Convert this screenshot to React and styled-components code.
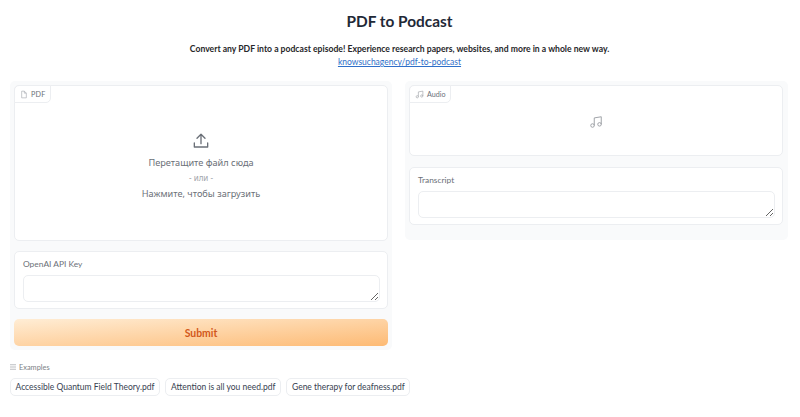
import React from "react";
import styled, { createGlobalStyle } from "styled-components";

const GlobalStyle = createGlobalStyle`
  html, body {
    margin: 0;
    padding: 0;
    background: #ffffff;
  }
  body {
    font-family: Lato, "Noto Sans", "Liberation Sans", sans-serif;
    color: #27272a;
  }
  * {
    box-sizing: border-box;
  }
`;

const App = () => {
  return (
    <>
      <GlobalStyle />
      <Page>
        <Title>PDF to Podcast</Title>
        <Intro>
          Convert any PDF into a podcast episode! Experience research papers,
          websites, and more in a whole new way.
        </Intro>
        <RepoLink href="#">knowsuchagency/pdf-to-podcast</RepoLink>
        <Columns>
          <LeftPanel>
            <Block $height={156}>
              <Tab>
                <FileIcon />
                <TabText $spaced>PDF</TabText>
              </Tab>
              <Dropzone>
                <UploadIcon />
                <DropMain>Перетащите файл сюда</DropMain>
                <DropOr>- или -</DropOr>
                <DropMain>Нажмите, чтобы загрузить</DropMain>
              </Dropzone>
            </Block>
            <Block $height={58}>
              <FieldLabel>OpenAI API Key</FieldLabel>
              <TextBox />
            </Block>
            <SubmitButton>Submit</SubmitButton>
          </LeftPanel>
          <RightPanel>
            <Block $height={71}>
              <Tab>
                <NoteIcon size={9} />
                <TabText>Audio</TabText>
              </Tab>
              <AudioEmpty>
                <NoteIcon size={14} />
              </AudioEmpty>
            </Block>
            <Block $height={58}>
              <FieldLabel>Transcript</FieldLabel>
              <TextBox />
            </Block>
          </RightPanel>
        </Columns>
        <ExamplesLabel>
          <ListIcon />
          Examples
        </ExamplesLabel>
        <Chips>
          <Chip>Accessible Quantum Field Theory.pdf</Chip>
          <Chip>Attention is all you need.pdf</Chip>
          <Chip>Gene therapy for deafness.pdf</Chip>
        </Chips>
      </Page>
    </>
  );
};

const FileIcon = () => (
  <svg width="8" height="9" viewBox="0 0 24 24" fill="none" stroke="#a9acb2" strokeWidth="2">
    <path d="M13 2H5v20h14V8z" />
    <path d="M13 2v6h6" />
  </svg>
);

const NoteIcon = ({ size }) => (
  <svg width={size} height={size} viewBox="0 0 24 24" fill="none" stroke="#9a9da3" strokeWidth="1.6">
    <path d="M9 18V5l12-2v13" />
    <circle cx="6" cy="18" r="3" />
    <circle cx="18" cy="16" r="3" />
  </svg>
);

const UploadIcon = () => (
  <svg width="16" height="16" viewBox="0 0 24 24" fill="none" stroke="#6b7078" strokeWidth="2" strokeLinecap="round" strokeLinejoin="round">
    <path d="M2 15v6h20v-6" />
    <path d="M12 16V2" />
    <path d="M6 8l6-6 6 6" />
  </svg>
);

const ListIcon = () => (
  <svg width="6" height="6" viewBox="0 0 8 8" stroke="#8f9299" strokeWidth="0.8">
    <path d="M0 1h8M0 4h8M0 7h8" />
  </svg>
);

const Page = styled.div`
  width: 800px;
  height: 417px;
  overflow: hidden;
  padding: 11px 11px 0 10px;
  display: flex;
  flex-direction: column;
`;

const Title = styled.h1`
  margin: 0;
  height: 20px;
  line-height: 20px;
  font-size: 15.4px;
  font-weight: 700;
  text-align: center;
  color: #1f2937;
`;

const Intro = styled.p`
  margin: 11px 0 0;
  height: 13px;
  line-height: 13px;
  font-size: 8.65px;
  font-weight: 700;
  text-align: center;
  color: #27272a;
`;

const RepoLink = styled.a`
  align-self: center;
  margin-top: 1px;
  height: 13px;
  line-height: 13px;
  font-size: 8.5px;
  color: #2f6fc9;
  text-decoration: underline;
`;

const Columns = styled.div`
  display: flex;
  align-items: flex-start;
  gap: 13px;
  margin-top: 12px;
`;

const Panel = styled.div`
  display: flex;
  flex-direction: column;
  gap: 10px;
  padding: 4px;
  background: #f9fafb;
  border-radius: 5px;
`;

const LeftPanel = styled(Panel)`
  width: 382px;
`;

const RightPanel = styled(Panel)`
  width: 383px;
  gap: 11px;
  padding: 4px 5px 15px 4px;
`;

const Block = styled.div`
  position: relative;
  height: ${(p) => p.$height}px;
  background: #ffffff;
  border: 1px solid #eceef1;
  border-radius: 5px;
  display: flex;
  flex-direction: column;
`;

const Tab = styled.div`
  position: absolute;
  top: -1px;
  left: -1px;
  height: 18px;
  padding: 0 4.5px;
  display: flex;
  align-items: center;
  gap: 3.5px;
  background: #ffffff;
  border: 1px solid #eceef1;
  border-radius: 5px 0 5px 0;
`;

const TabText = styled.span`
  font-size: 7.2px;
  color: #6b7078;
  letter-spacing: ${(p) => (p.$spaced ? "0.2px" : "0")};
`;

const Dropzone = styled.div`
  flex: 1;
  display: flex;
  flex-direction: column;
  align-items: center;
  padding-top: 47px;
`;

const DropMain = styled.div`
  height: 15px;
  line-height: 15px;
  font-family: "Noto Sans", sans-serif;
  font-size: 9.2px;
  color: #6b7078;
  &:nth-of-type(1) {
    margin-top: 6px;
  }
`;

const DropOr = styled.div`
  height: 16px;
  line-height: 16px;
  font-family: "Noto Sans", sans-serif;
  font-size: 8px;
  color: #a0a3a9;
`;

const AudioEmpty = styled.div`
  flex: 1;
  display: flex;
  align-items: center;
  justify-content: center;
  padding-top: 2px;
`;

const FieldLabel = styled.label`
  margin: 6px 8px 0;
  height: 13px;
  line-height: 13px;
  font-size: 8.4px;
  color: #6b7078;
`;

const TextBox = styled.textarea`
  display: block;
  margin: 4px 7px 0 8px;
  height: 27px;
  padding: 0;
  background: #ffffff;
  border: 1px solid #eceef1;
  border-radius: 5px;
  outline: none;
`;

const SubmitButton = styled.button`
  height: 27px;
  border: none;
  border-radius: 5px;
  background: linear-gradient(to bottom right, #ffedd5, #fdba74);
  color: #d2581a;
  font-family: inherit;
  font-size: 10.4px;
  font-weight: 700;
`;

const ExamplesLabel = styled.div`
  display: flex;
  align-items: center;
  gap: 3px;
  margin-top: 11px;
  height: 12px;
  font-size: 7.4px;
  color: #7c7f86;
`;

const Chips = styled.div`
  display: flex;
  gap: 5.5px;
  margin-top: 5px;
`;

const Chip = styled.div`
  height: 18px;
  line-height: 16px;
  padding: 0 4.5px;
  background: #ffffff;
  border: 1px solid #eceef1;
  border-radius: 5px;
  font-size: 8.5px;
  color: #374151;
`;

export default App;
